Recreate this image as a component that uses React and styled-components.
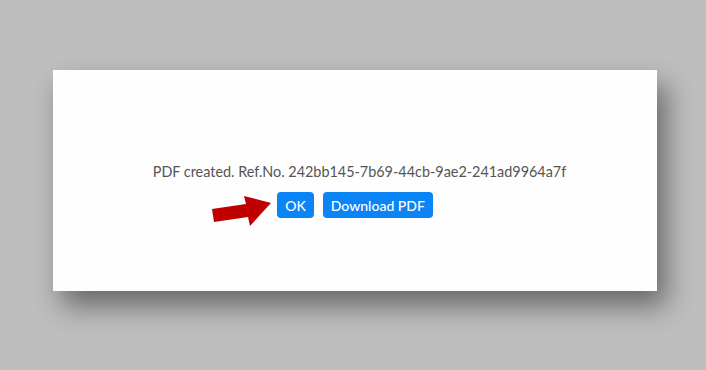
import styled, { createGlobalStyle } from "styled-components";

const Global = createGlobalStyle`
  html, body {
    margin: 0;
    padding: 0;
    background: #bebebe;
  }
  body {
    font-family: Lato, "Open Sans", sans-serif;
  }
`;

const Page = styled.div`
  width: 706px;
  height: 370px;
  box-sizing: border-box;
  padding: 70px 49px 0 53px;
`;

const Card = styled.div`
  position: relative;
  height: 221px;
  background: #fefefe;
  box-shadow: 9px 15px 26px rgba(0, 0, 0, 0.45);
  display: flex;
  flex-direction: column;
  align-items: center;
  padding-top: 92px;
  box-sizing: border-box;
`;

const Message = styled.div`
  font-size: 14.4px;
  color: #555;
  line-height: 20px;
  margin-left: 9px;
`;

const Actions = styled.div`
  display: flex;
  gap: 9px;
  margin-top: 10px;
`;

const Button = styled.button`
  font-family: inherit;
  font-size: 14px;
  font-weight: 500;
  color: #fff;
  background: #0b84f6;
  border: none;
  border-radius: 4px;
  height: 26px;
  padding: 0 8px;
`;

const Pointer = styled.svg`
  position: absolute;
  left: 158px;
  top: 124px;
`;

export default function App() {
  return (
    <>
      <Global />
      <Page>
        <Card>
          <Message>PDF created. Ref.No. 242bb145-7b69-44cb-9ae2-241ad9964a7f</Message>
          <Actions>
            <Button>OK</Button>
            <Button>Download PDF</Button>
          </Actions>
          <Pointer width="64" height="36" viewBox="0 0 64 36">
            <polygon points="1,15 35,10 33,2 60,9 39,32 37,23 3,28" fill="#c00000" />
          </Pointer>
        </Card>
      </Page>
    </>
  );
}
